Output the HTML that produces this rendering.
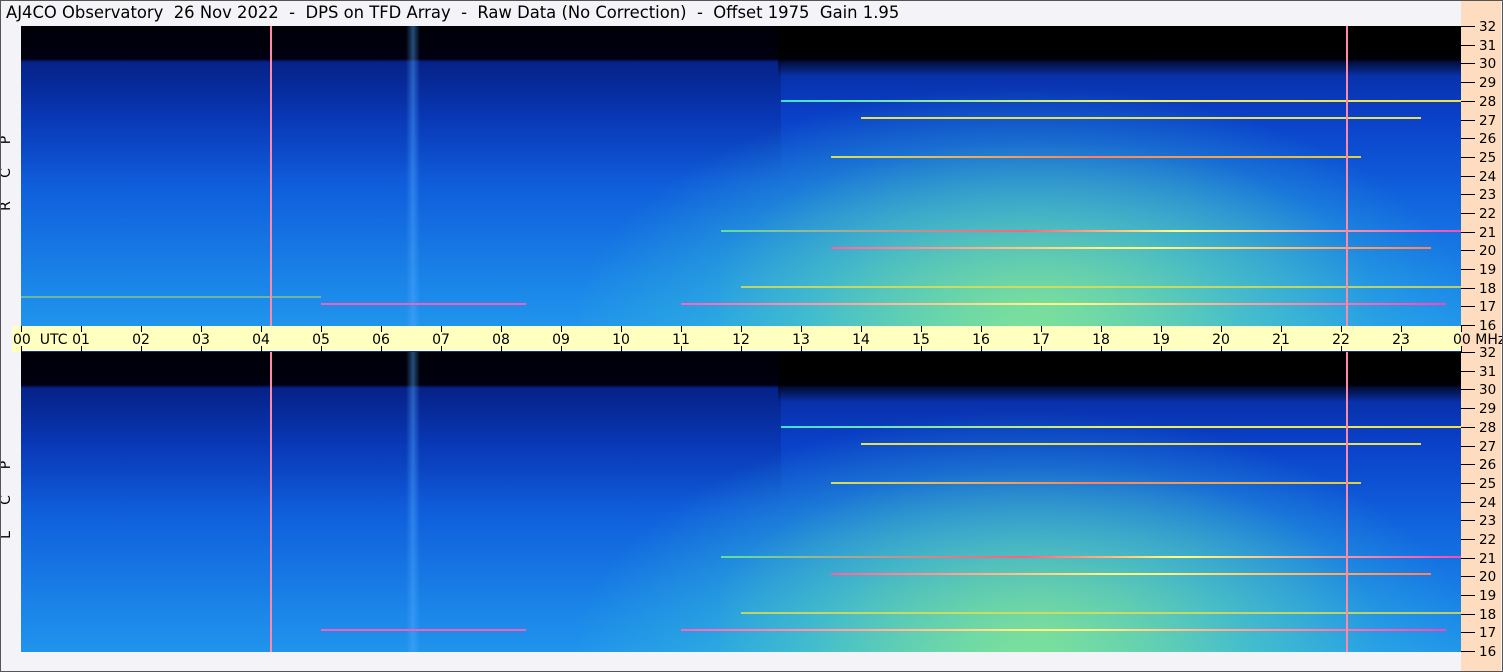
<!DOCTYPE html>
<html><head><meta charset="utf-8"><style>
*{margin:0;padding:0;box-sizing:border-box}
body{width:1503px;height:672px;overflow:hidden;background:#f4f4f8;font-family:"DejaVu Sans",sans-serif;position:relative}
#frame{position:absolute;left:0;top:0;width:1503px;height:672px;border:1px solid #555}
.title{position:absolute;left:6px;top:3px;font-size:16.4px;color:#000;white-space:pre}
.right{position:absolute;left:1461px;top:0;width:40px;height:671px;background:#fddcc0}
.panel{position:absolute;left:21px;width:1440px;height:300px;overflow:hidden;
 background:linear-gradient(#000008 0,#000010 11%,#082ca0 12%,#0a40c8 30%,#1060dc 55%,#1a84e8 85%,#2094ec 100%)}
.panel div{position:absolute}
.blk{left:757px;top:0;width:683px;height:50px;background:linear-gradient(#000 0,#000 45%,rgba(0,0,10,0.6) 75%,rgba(0,0,0,0) 100%)}
.glow1{left:560px;top:30px;width:1200px;height:300px;background:radial-gradient(ellipse 38% 85% at 37% 95%,rgba(110,225,160,0.9),rgba(60,200,210,0.6) 50%,rgba(20,120,230,0) 100%)}
.glow2{left:700px;top:80px;width:800px;height:220px;background:radial-gradient(ellipse 42% 75% at 40% 90%,rgba(160,240,130,0.45),rgba(0,0,0,0) 100%)}
.dk{left:0;top:34px;width:760px;height:120px;background:linear-gradient(rgba(0,10,80,0.3),rgba(0,10,80,0))}
.v1{left:385px;top:0;width:14px;height:300px;background:linear-gradient(90deg,rgba(80,160,255,0),rgba(80,170,255,0.45),rgba(80,160,255,0))}
.pk{top:0;width:2px;height:300px;background:#ff8aa8}
.h{height:2px}
</style></head><body>
<div class="title">AJ4CO Observatory  26 Nov 2022  -  DPS on TFD Array  -  Raw Data (No Correction)  -  Offset 1975  Gain 1.95</div>
<div class="right"></div>

<div class="panel" style="top:26px">
<div class="dk"></div><div class="blk"></div><div class="glow1"></div><div class="glow2"></div><div class="v1"></div>
<div class="h" style="left:760px;top:74px;width:680px;background:linear-gradient(90deg,#40e0d0,#f0f060,#f0e040)"></div>
<div class="h" style="left:840px;top:91px;width:560px;background:#e8e050"></div>
<div class="h" style="left:810px;top:130px;width:530px;background:linear-gradient(90deg,#d0e060,#ff8060,#e0d040)"></div>
<div class="h" style="left:700px;top:204px;width:760px;background:linear-gradient(90deg,#60e0a0,#ff6080 40%,#ffff80 60%,#f040c0)"></div>
<div class="h" style="left:810px;top:221px;width:600px;background:linear-gradient(90deg,#ff60a0,#ffff80,#ff8060)"></div>
<div class="h" style="left:720px;top:260px;width:720px;background:#e0e050;opacity:.8"></div>
<div class="h" style="left:660px;top:277px;width:765px;background:linear-gradient(90deg,#ff60c0,#ffff80,#ff40c0)"></div>
<div class="h" style="left:300px;top:277px;width:205px;background:#f060c0"></div>
<div class="h" style="left:0;top:270px;width:300px;background:#c0e060;opacity:.5"></div>
<div class="pk" style="left:249px"></div><div class="pk" style="left:1325px"></div>
</div>

<div class="panel" style="top:352px">
<div class="dk"></div><div class="blk"></div><div class="glow1"></div><div class="glow2"></div><div class="v1"></div>
<div class="h" style="left:760px;top:74px;width:680px;background:linear-gradient(90deg,#40e0d0,#f0f060,#f0e040)"></div>
<div class="h" style="left:840px;top:91px;width:560px;background:#e8e050"></div>
<div class="h" style="left:810px;top:130px;width:530px;background:linear-gradient(90deg,#d0e060,#ff8060,#e0d040)"></div>
<div class="h" style="left:700px;top:204px;width:760px;background:linear-gradient(90deg,#60e0a0,#ff6080 40%,#ffff80 60%,#f040c0)"></div>
<div class="h" style="left:810px;top:221px;width:600px;background:linear-gradient(90deg,#ff60a0,#ffff80,#ff8060)"></div>
<div class="h" style="left:720px;top:260px;width:720px;background:#e0e050;opacity:.8"></div>
<div class="h" style="left:660px;top:277px;width:765px;background:linear-gradient(90deg,#ff60c0,#ffff80,#ff40c0)"></div>
<div class="h" style="left:300px;top:277px;width:205px;background:#f060c0"></div>
<div class="pk" style="left:249px"></div><div class="pk" style="left:1325px"></div>
</div>

<div style="position:absolute;left:12px;top:326px;width:1449px;height:26px;background:#ffffc0"></div>
<div style="position:absolute;left:21px;top:351px;width:1440px;height:1px;background:#1030a0"></div>

<svg width="1503" height="672" style="position:absolute;left:0;top:0" font-family="DejaVu Sans, sans-serif" font-size="14">
<g stroke="#000" stroke-width="1">
<path d="M21.5 326v6M21.5 346v6M81.5 326v6M81.5 346v6M141.5 326v6M141.5 346v6M201.5 326v6M201.5 346v6M261.5 326v6M261.5 346v6M321.5 326v6M321.5 346v6M381.5 326v6M381.5 346v6M441.5 326v6M441.5 346v6M501.5 326v6M501.5 346v6M561.5 326v6M561.5 346v6M621.5 326v6M621.5 346v6M681.5 326v6M681.5 346v6M741.5 326v6M741.5 346v6M801.5 326v6M801.5 346v6M861.5 326v6M861.5 346v6M921.5 326v6M921.5 346v6M981.5 326v6M981.5 346v6M1041.5 326v6M1041.5 346v6M1101.5 326v6M1101.5 346v6M1161.5 326v6M1161.5 346v6M1221.5 326v6M1221.5 346v6M1281.5 326v6M1281.5 346v6M1341.5 326v6M1341.5 346v6M1401.5 326v6M1401.5 346v6M1461.5 326v6M1461.5 346v6"/>
</g>
<g fill="#000" text-anchor="middle">
<text x="81" y="344">01</text><text x="141" y="344">02</text><text x="201" y="344">03</text><text x="261" y="344">04</text>
<text x="321" y="344">05</text><text x="381" y="344">06</text><text x="441" y="344">07</text><text x="501" y="344">08</text>
<text x="561" y="344">09</text><text x="621" y="344">10</text><text x="681" y="344">11</text><text x="741" y="344">12</text>
<text x="801" y="344">13</text><text x="861" y="344">14</text><text x="921" y="344">15</text><text x="981" y="344">16</text>
<text x="1041" y="344">17</text><text x="1101" y="344">18</text><text x="1161" y="344">19</text><text x="1221" y="344">20</text>
<text x="1281" y="344">21</text><text x="1341" y="344">22</text><text x="1401" y="344">23</text>
</g>
<text x="13" y="344" fill="#000" xml:space="preserve">00  UTC</text>
<text x="1453" y="344" fill="#000">00 MHz</text>
<g fill="#000" font-size="14">
<text x="15" y="145" transform="rotate(-90 10 145)" text-anchor="middle">P</text>
<text x="15" y="178" transform="rotate(-90 10 178)" text-anchor="middle">C</text>
<text x="15" y="211" transform="rotate(-90 10 211)" text-anchor="middle">R</text>
<text x="15" y="470" transform="rotate(-90 10 470)" text-anchor="middle">P</text>
<text x="15" y="505" transform="rotate(-90 10 505)" text-anchor="middle">C</text>
<text x="15" y="540" transform="rotate(-90 10 540)" text-anchor="middle">L</text>
</g>
<g stroke="#000">
<path d="M1461 26.5h14M1461 45.5h14M1461 63.5h14M1461 82.5h14M1461 101.5h14M1461 120.5h14M1461 138.5h14M1461 157.5h14M1461 176.5h14M1461 194.5h14M1461 213.5h14M1461 232.5h14M1461 250.5h14M1461 269.5h14M1461 288.5h14M1461 306.5h14M1461 325.5h14"/>
<path d="M1461 352.5h14M1461 371.5h14M1461 389.5h14M1461 408.5h14M1461 427.5h14M1461 446.5h14M1461 464.5h14M1461 483.5h14M1461 502.5h14M1461 520.5h14M1461 539.5h14M1461 558.5h14M1461 576.5h14M1461 595.5h14M1461 614.5h14M1461 632.5h14M1461 651.5h14"/>
</g>
<g fill="#000" font-size="13.5">
<text x="1479" y="31">32</text><text x="1479" y="50">31</text><text x="1479" y="68">30</text><text x="1479" y="87">29</text>
<text x="1479" y="106">28</text><text x="1479" y="125">27</text><text x="1479" y="143">26</text><text x="1479" y="162">25</text>
<text x="1479" y="181">24</text><text x="1479" y="199">23</text><text x="1479" y="218">22</text><text x="1479" y="237">21</text>
<text x="1479" y="255">20</text><text x="1479" y="274">19</text><text x="1479" y="293">18</text><text x="1479" y="311">17</text>
<text x="1479" y="330">16</text>
<text x="1479" y="357">32</text><text x="1479" y="376">31</text><text x="1479" y="394">30</text><text x="1479" y="413">29</text>
<text x="1479" y="432">28</text><text x="1479" y="451">27</text><text x="1479" y="469">26</text><text x="1479" y="488">25</text>
<text x="1479" y="507">24</text><text x="1479" y="525">23</text><text x="1479" y="544">22</text><text x="1479" y="563">21</text>
<text x="1479" y="581">20</text><text x="1479" y="600">19</text><text x="1479" y="619">18</text><text x="1479" y="637">17</text>
<text x="1479" y="656">16</text>
</g>
</svg>
<div id="frame"></div>
</body></html>
